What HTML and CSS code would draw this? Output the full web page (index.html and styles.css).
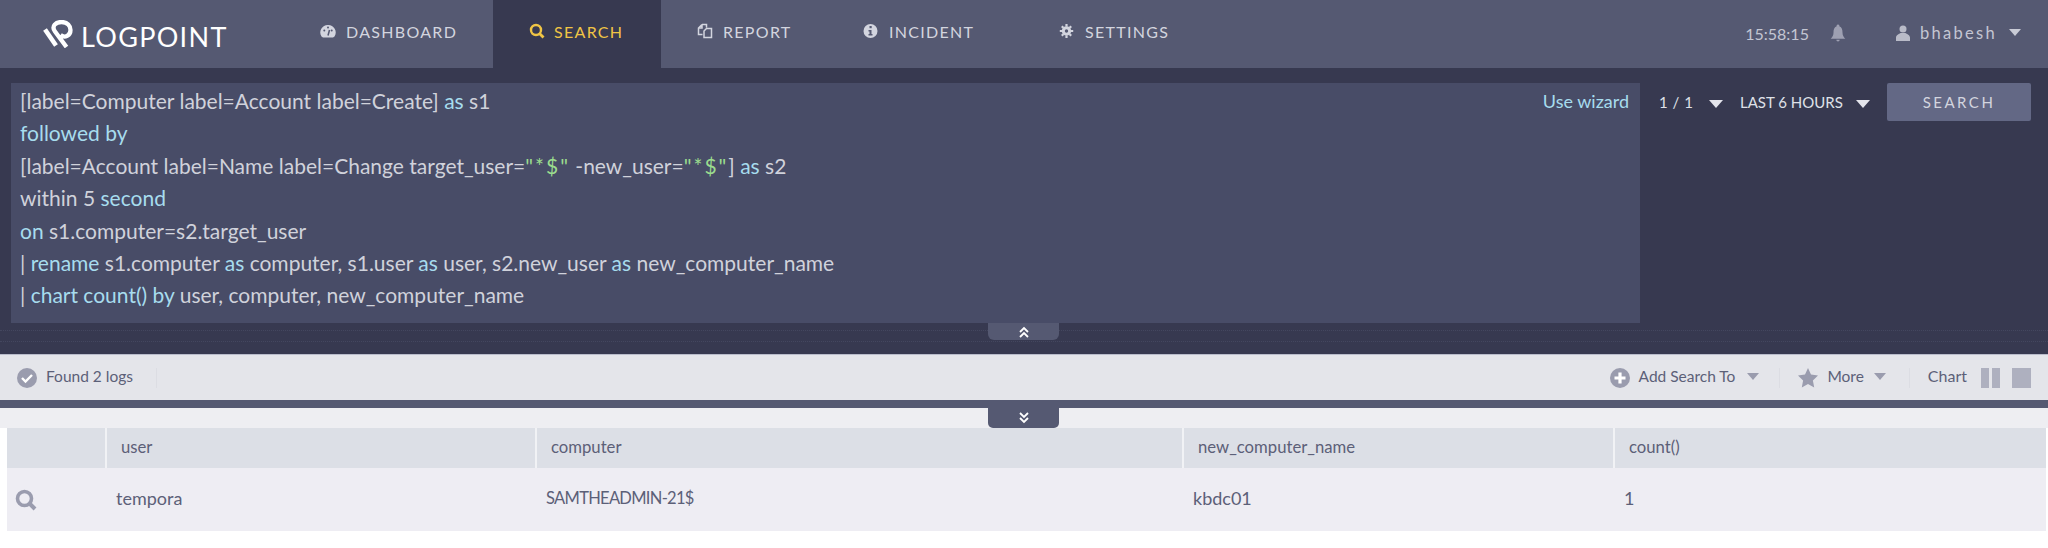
FILE: index.html
```html
<!DOCTYPE html>
<html lang="en">
<head>
<meta charset="utf-8">
<title>LogPoint Search</title>
<link rel="stylesheet" href="styles.css">
</head>
<body>
<header class="nav">
  <div class="logo">
    <svg class="logo-mark" viewBox="0 0 30 28" width="30" height="28"><path d="M2 9.500 L13 25.500" fill="none" stroke="#fff" stroke-width="4.500"/><path d="M23.500 27 L12 11.500 C8 6 13 2 18.500 2 C24.500 2 27.500 6 27.500 10 C27.500 15.500 22 18.500 17.500 15" fill="none" stroke="#fff" stroke-width="4.300"/></svg>
    <span class="logo-text">LOGPOINT</span>
  </div>
  <a class="tab tab-dashboard"><svg class="ico" viewBox="0 0 16 16"><path d="M8 2a7.500 7.500 0 0 0-6.500 11.500L3 14.500h10l1.500-1a7.500 7.500 0 0 0-6.500-11.500z" fill="#d3d5df"/><circle cx="8" cy="4.500" r="1" fill="#555972"/><circle cx="4.300" cy="7.500" r="1" fill="#555972"/><circle cx="11.700" cy="7.500" r="1" fill="#555972"/><path d="M8 12.500 L9.500 7" stroke="#555972" stroke-width="1.500"/></svg>DASHBOARD</a>
  <a class="tab tab-search"><svg class="ico" viewBox="0 0 16 16"><circle cx="7" cy="7" r="5" fill="none" stroke="#f0c545" stroke-width="2.400"/><path d="M10.500 10.500 L14.500 14.500" stroke="#f0c545" stroke-width="2.800"/></svg>SEARCH</a>
  <a class="tab tab-report"><svg class="ico" viewBox="0 0 16 16"><path d="M5 1.500h4.500v3M5 1.500 1.500 5v6.500h4M5 1.500V5H1.500M9.500 5.500h5v9h-7.500V8z" fill="none" stroke="#d3d5df" stroke-width="1.500"/></svg>REPORT</a>
  <a class="tab tab-incident"><svg class="ico" viewBox="0 0 16 16"><circle cx="7.500" cy="8" r="7" fill="#d3d5df"/><rect x="6.500" y="3" width="2.200" height="2.200" fill="#555972"/><path d="M5.500 7h3v4h1v1.500h-4V11h1V8.500h-1z" fill="#555972"/></svg>INCIDENT</a>
  <a class="tab tab-settings"><svg class="ico" viewBox="0 0 16 16"><circle cx="7.500" cy="8" r="3.200" fill="none" stroke="#d3d5df" stroke-width="3"/><g stroke="#d3d5df" stroke-width="2.200"><path d="M7.500 1v2.500M7.500 12.500V15M.8 8h2.500M11.700 8h2.500M2.800 3.300l1.700 1.700M10.500 11l1.700 1.700M2.800 12.700 4.500 11M10.500 5l1.700-1.700"/></g></svg>SETTINGS</a>
  <div class="nav-right">
    <span class="clock">15:58:15</span>
    <svg class="bell" viewBox="0 0 16 16"><path d="M8 0.500a1.200 1.200 0 0 1 1.200 1.500C11.500 3 12 5 12 7.500c0 2.500 1 4 2.500 5.500h-13C3 11.500 4 10 4 7.500 4 5 4.500 3 6.800 2A1.200 1.200 0 0 1 8 0.500zM6.500 14h3a1.500 1.500 0 0 1-3 0z" fill="#9ea0b2"/></svg>
    <svg class="person" viewBox="0 0 14 16"><circle cx="7" cy="4" r="3.500" fill="#b9bbc8"/><path d="M0 16v-3.500C0 10 3 9 4.500 8h5C11 9 14 10 14 12.500V16z" fill="#b9bbc8"/></svg>
    <span class="user-name">bhabesh</span>
    <span class="caret caret-user"></span>
  </div>
</header>

<section class="query-area">
  <div class="editor">
    <div class="query">
      <div>[label=Computer label=Account label=Create] <b>as</b> s1</div>
      <div><b>followed by</b></div>
      <div>[label=Account label=Name label=Change target_user=<i>"*$"</i> -new_user=<i>"*$"</i>] <b>as</b> s2</div>
      <div>within 5 <b>second</b></div>
      <div><b>on</b> s1.computer=s2.target_user</div>
      <div>| <b>rename</b> s1.computer <b>as</b> computer, s1.user <b>as</b> user, s2.new_user <b>as</b> new_computer_name</div>
      <div>| <b>chart count() by</b> user, computer, new_computer_name</div>
    </div>
    <a class="wizard">Use wizard</a>
  </div>
  <div class="controls">
    <span class="repo">1 / 1</span><span class="caret caret-light caret-repo"></span>
    <span class="range">LAST 6 HOURS</span><span class="caret caret-light caret-range"></span>
    <button class="search-btn">SEARCH</button>
  </div>
  <button class="handle handle-up"><svg viewBox="0 0 12 12" width="12" height="12"><path d="M2 6 6 2l4 4M2 11l4-4 4 4" fill="none" stroke="#fff" stroke-width="1.800"/></svg></button>
</section>

<section class="toolbar">
  <svg class="tool-ico check" viewBox="0 0 20 20"><circle cx="10" cy="10" r="10" fill="#9a9cae"/><path d="M5 10l3.500 3.500L15 7" fill="none" stroke="#fff" stroke-width="2.400"/></svg>
  <span class="tool-label found">Found 2 logs</span>
  <span class="divider divider-found"></span>
  <svg class="tool-ico plus" viewBox="0 0 20 20"><circle cx="10" cy="10" r="10" fill="#9a9cae"/><path d="M10 4.500v11M4.500 10h11" stroke="#fff" stroke-width="3.200"/></svg>
  <span class="tool-label add">Add Search To</span>
  <span class="caret caret-gray caret-add"></span>
  <span class="divider divider-add"></span>
  <svg class="tool-ico star" viewBox="0 0 20 20"><path d="M10 0l3 6.600 7 .9-5.100 4.900 1.300 7.200L10 16l-6.200 3.600 1.300-7.200L0 7.500l7-.9z" fill="#9a9cae"/></svg>
  <span class="tool-label more">More</span>
  <span class="caret caret-gray caret-more"></span>
  <span class="divider divider-more"></span>
  <span class="tool-label chart">Chart</span>
  <span class="view view-split"><i></i><i></i></span>
  <span class="view view-full"></span>
</section>

<div class="stripe"><button class="handle handle-down"><svg viewBox="0 0 12 12" width="12" height="12"><path d="M2 1l4 4 4-4M2 6l4 4 4-4" fill="none" stroke="#fff" stroke-width="1.800"/></svg></button></div>

<section class="results">
  <div class="grid head">
    <div class="cell"></div>
    <div class="cell">user</div>
    <div class="cell">computer</div>
    <div class="cell">new_computer_name</div>
    <div class="cell">count()</div>
  </div>
  <div class="grid row">
    <div class="cell"><svg class="row-search" viewBox="0 0 22 22"><circle cx="9.500" cy="9.500" r="7" fill="none" stroke="#9a9cae" stroke-width="3.600"/><path d="M14.500 14.500 L20 20" stroke="#9a9cae" stroke-width="4"/></svg></div>
    <div class="cell">tempora</div>
    <div class="cell caps">SAMTHEADMIN-21$</div>
    <div class="cell">kbdc01</div>
    <div class="cell">1</div>
  </div>
</section>
</body>
</html>
```
FILE: styles.css
```css
* { box-sizing: border-box; }
html, body { margin: 0; padding: 0; }
body { width: 2048px; height: 548px; overflow: hidden; background: #fff; font-family: Lato, "Open Sans", sans-serif; color: #5c6078; }
button { font-family: inherit; border: 0; cursor: pointer; }
a { text-decoration: none; }

.nav { height: 68px; display: flex; align-items: stretch; background: #555972; }
.logo { width: 284px; padding: 20px 0 0 43px; display: flex; align-items: flex-start; gap: 9px; }
.logo-mark { flex: none; }
.logo-text { font-size: 27px; line-height: 32px; color: #fff; letter-spacing: 1.300px; margin-left: -1px; margin-top: 1px; }
.tab { display: flex; align-items: center; gap: 10px; padding: 0 0 6px 36px; font-size: 16px; letter-spacing: 1.300px; color: #d3d5df; }
.ico { width: 16px; height: 16px; flex: none; }
.tab-dashboard { width: 209px; }
.tab-search { width: 168px; background: #373950; color: #f0c545; gap: 9px; }
.tab-report { width: 166px; }
.tab-incident { width: 196px; }
.tab-settings { width: 180px; }
.nav-right { margin-left: auto; display: flex; align-items: center; padding: 0 27px 2px 0; }
.clock { font-size: 16px; color: #c4c6d2; margin-right: 20px; }
.bell { width: 18px; height: 18px; margin-right: 49px; }
.person { width: 14px; height: 16px; margin-right: 10px; }
.user-name { font-size: 16.500px; letter-spacing: 2.300px; color: #c4c6d2; margin-right: 12px; }

.caret { display: block; width: 0; height: 0; border-style: solid; border-color: transparent; border-width: 7px 6px 0; }
.caret-user { border-top-color: #c9cbd6; margin-top: -2px; }
.caret-light { border-top-color: #e4e5ec; border-width: 8px 7px 0; margin-top: 4px; }
.caret-gray { border-top-color: #9a9cae; margin-top: -2px; }

.query-area { position: relative; height: 286px; background: #373950; padding: 15px 13px 0 11px; display: flex; align-items: flex-start; }
.query-area::before { content: ""; position: absolute; left: 0; right: 0; top: 262px; height: 10px; border-top: 1px dotted #44475f; border-bottom: 1px dotted #44475f; }
.editor { width: 1629px; height: 240px; background: #484c67; display: flex; justify-content: space-between; padding: 0 11px 0 9px; flex: none; }
.query { font-size: 21px; line-height: 32.400px; color: #d0d2db; padding-top: 2px; white-space: nowrap; }
.query b { font-weight: 400; color: #a7dcee; }
.query i { font-style: normal; color: #9bdc8e; letter-spacing: 2px; }
.wizard { font-size: 18px; line-height: 37px; color: #a7dcee; }
.controls { flex: 1; height: 38px; display: flex; align-items: center; padding-left: 19px; color: #dfe1e8; font-size: 15px; }
.repo { width: 50px; letter-spacing: 0.500px; }
.caret-repo { margin-right: 17px; }
.range { width: 116px; }
.caret-range { margin-right: 17px; }
.search-btn { width: 144px; height: 38px; border-radius: 2px; background: #636885; color: #d3d5df; font-size: 15px; letter-spacing: 2.500px; }
.handle { position: absolute; z-index: 1; left: 988px; width: 71px; padding: 0; background: #555972; display: flex; align-items: center; justify-content: center; }
.handle-up { top: 255px; height: 17px; border-radius: 0 0 6px 6px; }
.handle-down { top: 0; height: 20px; border-radius: 0 0 5px 5px; }

.toolbar { height: 46px; background: #e4e5ea; border-top: 1px solid #b9bccb; display: flex; align-items: center; font-size: 15px; }
.tool-ico { width: 20px; height: 20px; flex: none; }
.check { margin-left: 17px; }
.found { margin-left: 9px; }
.divider { width: 1px; height: 20px; background: #dcdde3; }
.divider-found { margin-left: 23px; margin-right: auto; }
.tool-label { font-size: 15.500px; padding-bottom: 3px; }
.add { margin-left: 9px; }
.caret-add { margin-left: 12px; }
.divider-add { margin-left: 20px; }
.star { margin-left: 18px; }
.more { margin-left: 9px; }
.caret-more { margin-left: 10px; }
.divider-more { margin-left: 23px; }
.chart { margin-left: 18px; font-size: 16px; padding-bottom: 4px; }
.view { display: flex; height: 20px; gap: 3px; }
.view i { display: block; width: 8px; background: #aeb0bf; }
.view-split { margin-left: 14px; width: 19px; }
.view-full { margin-left: 12px; margin-right: 17px; width: 19px; background: #aeb0bf; }

.stripe { position: relative; height: 28px; background: linear-gradient(#555972 8px, #eeeef2 8px); }
.stripe .handle-down { top: 8px; }

.results { padding-left: 7px; padding-right: 2px; background: #fff; }
.grid { display: grid; grid-template-columns: 100px 430px 647px 431px 431px; }
.head { height: 40px; background: #dcdfe6; font-size: 16.700px; line-height: 38px; }
.head .cell { padding-left: 14px; border-right: 2px solid #f1f2f5; }
.head .cell:last-child { border-right: 0; }
.row { height: 63px; background: #eeedf3; font-size: 18px; line-height: 60px; }
.row .cell { padding-left: 9px; }
.row .cell:first-child { padding-left: 8px; }
.row .caps { font-size: 16.500px; letter-spacing: -0.700px; }
.row-search { width: 22px; height: 22px; margin-top: 21px; display: block; }
```
